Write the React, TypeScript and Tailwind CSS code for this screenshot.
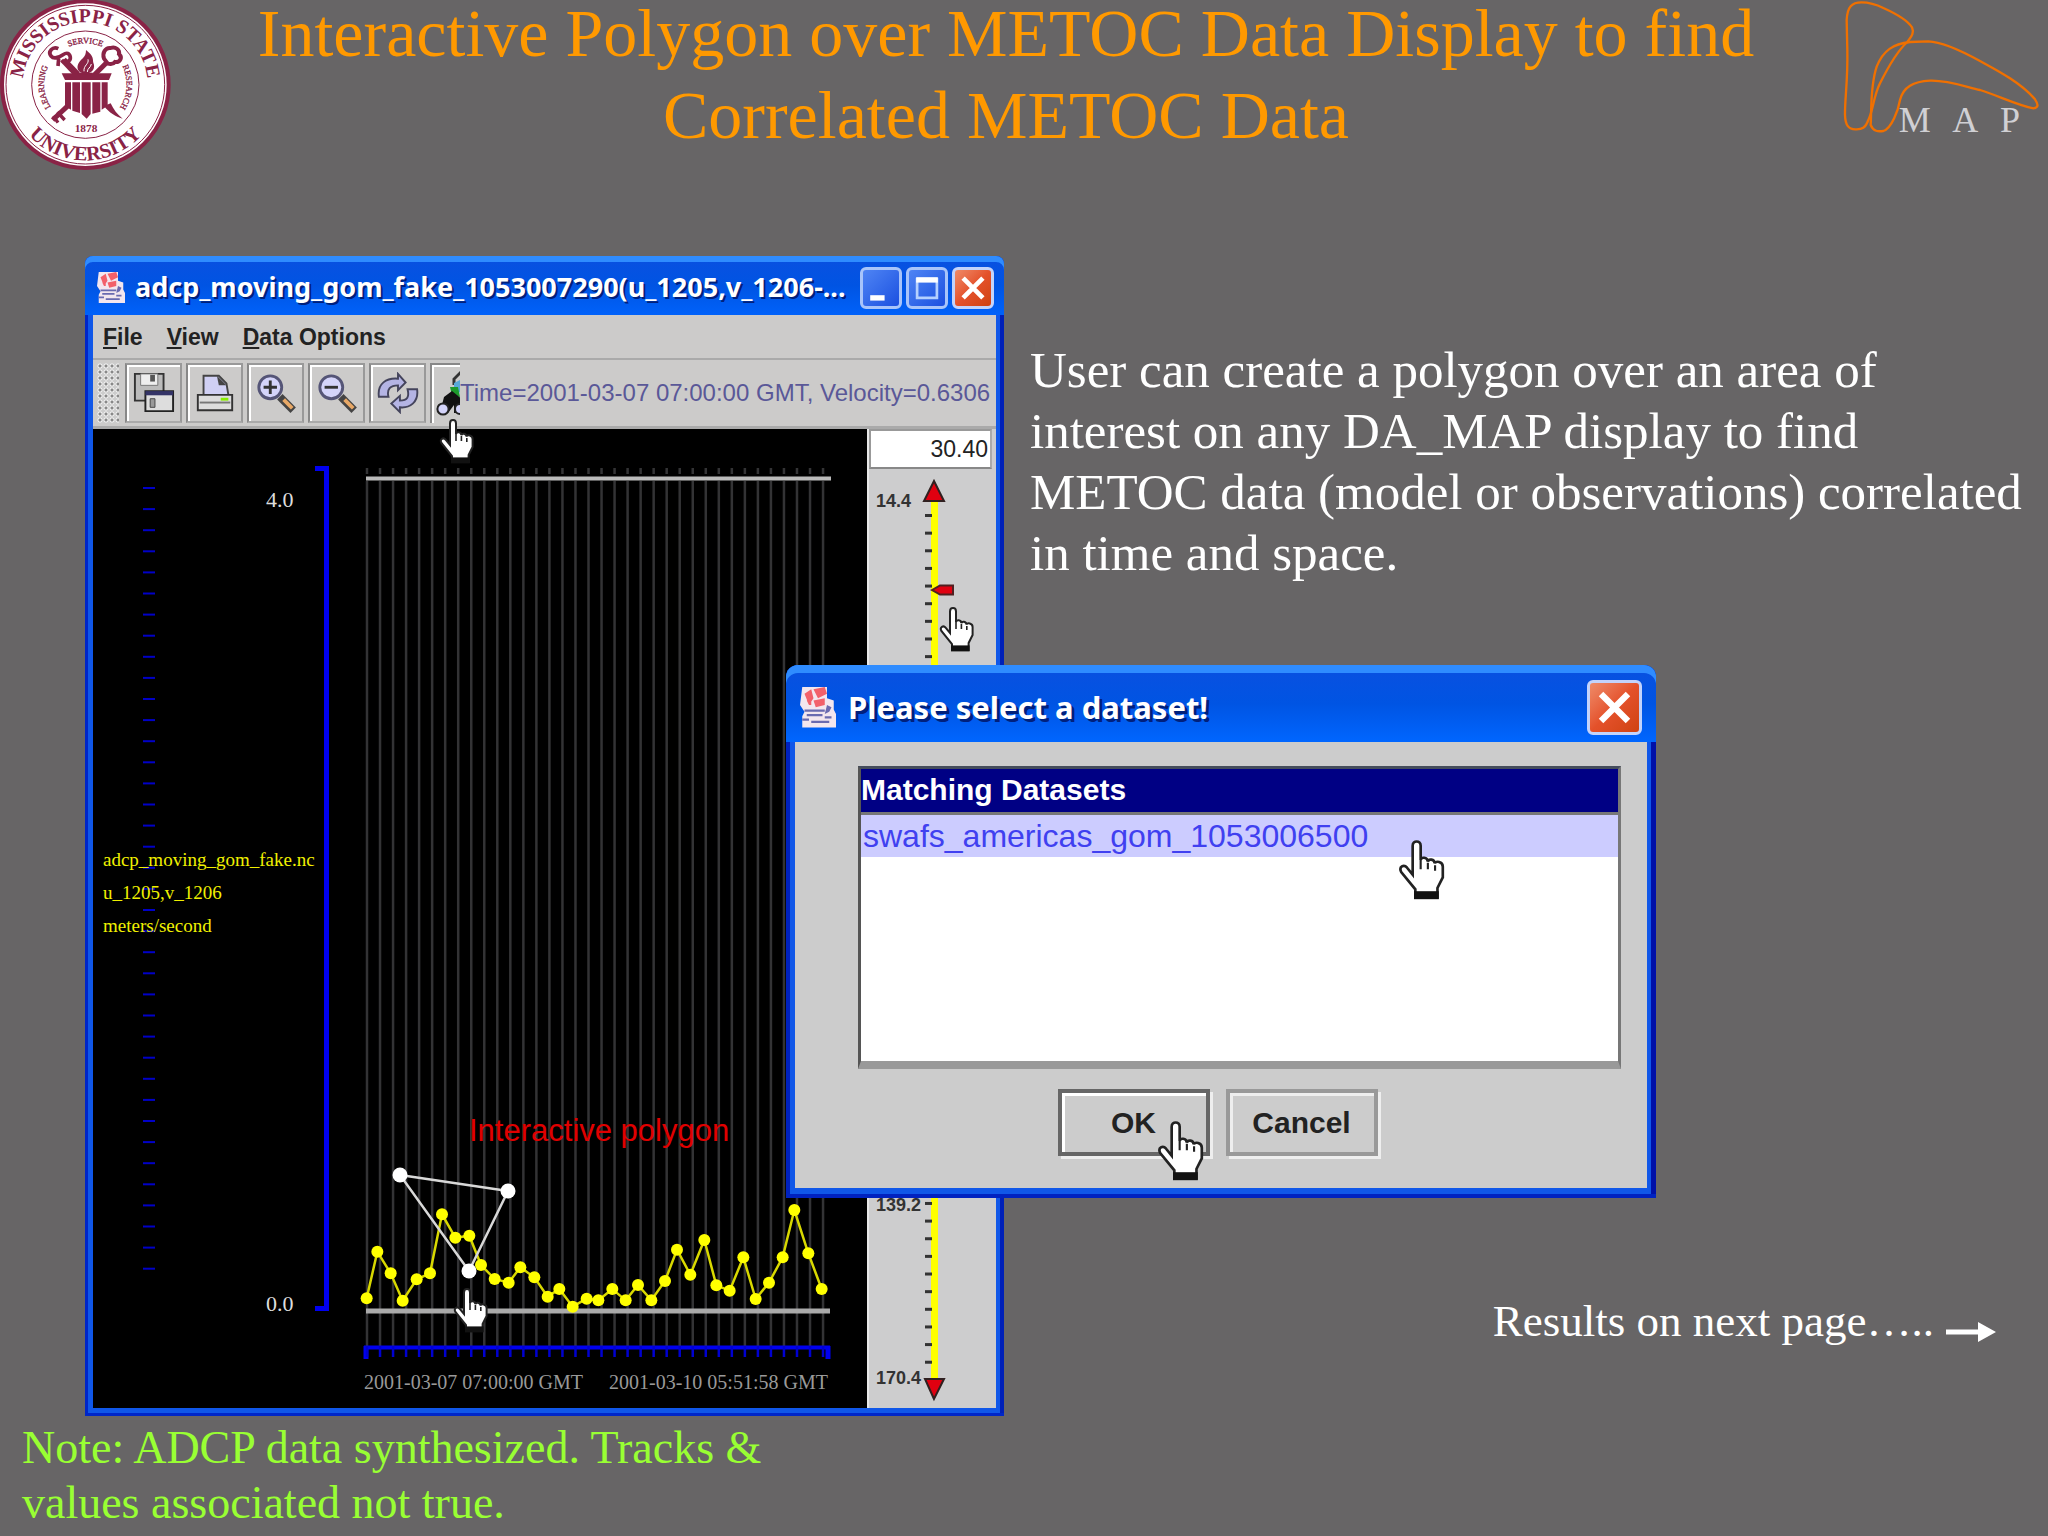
import { useState } from "react";
import type { ReactNode } from "react";

const MAROON = "#8a2346";

// readings of the current profile, [x, y] in chart units
const readings = [
  [80, 655], [112, 515], [152, 580], [188, 662], [230, 598], [270, 580],
  [306, 403], [346, 473], [388, 467], [423, 555], [464, 597], [506, 608],
  [541, 562], [583, 592], [623, 650], [658, 627], [698, 680], [740, 656],
  [775, 661], [817, 627], [857, 661], [894, 615], [934, 661], [975, 603],
  [1011, 509], [1051, 584], [1093, 480], [1129, 616], [1169, 632], [1210, 532],
  [1247, 657], [1287, 608], [1328, 532], [1363, 390], [1405, 520], [1445, 627],
].map(([x, y]) => [340 + x / 3, 1080 + y / 3]);

const polygon = [
  [400, 1175],
  [508, 1191],
  [469, 1271],
];

const depthTicks = Array.from({ length: 38 }, (_, i) => 488 + i * 21.1);

function Seal() {
  return (
    <svg viewBox="0 0 540 540" className="mr-3 w-[180px] shrink-0" role="img" aria-label="Mississippi State University">
      <defs>
        <path id="sealTop" d="M69 254a187 187 0 0 1 374 0" />
        <path id="sealBottom" d="M29 254a227 227 0 0 0 454 0" />
        <path id="sealInner" d="M256 378a124 124 0 0 1 0 -248a124 124 0 0 1 0 248" />
      </defs>
      <circle cx="256" cy="254" r="250" fill="#fff" stroke={MAROON} strokeWidth="12" />
      <circle cx="256" cy="254" r="238" fill="none" stroke={MAROON} strokeWidth="3" />
      <circle cx="256" cy="254" r="161" fill="none" stroke={MAROON} strokeWidth="3" />
      <g fill={MAROON} fontFamily="'Liberation Serif', serif" fontWeight="700" textAnchor="middle">
        <text fontSize="59">
          <textPath href="#sealTop" startOffset="50%">MISSISSIPPI STATE</textPath>
        </text>
        <text fontSize="61">
          <textPath href="#sealBottom" startOffset="50%">UNIVERSITY</textPath>
        </text>
        <g fontSize="25" fontWeight="400" stroke={MAROON} strokeWidth="1">
          <text>
            <textPath href="#sealInner" startOffset="24%">LEARNING</textPath>
          </text>
          <text>
            <textPath href="#sealInner" startOffset="50%">SERVICE</textPath>
          </text>
          <text>
            <textPath href="#sealInner" startOffset="76%">RESEARCH</textPath>
          </text>
        </g>
        <text x="258" y="396" fontSize="34">1878</text>
      </g>
      <g fill="none" stroke={MAROON} strokeWidth="15">
        <path d="M318 190L282 226" />
        <path d="M312 176c-6-18 4-34 20-32 14-6 28 6 25 18 12 12 2 26-12 24-6 8-20 8-24 2z" strokeWidth="12" />
        <path d="M190 180L232 224" strokeWidth="20" />
        <path d="M175 146c-18-8-32 10-22 22 8 10 24 4 36-4 12-8 20-4 22 8 2 14-18 18-26 8M176 176l-2 22" strokeWidth="11" />
        <path d="M205 316L158 360" />
        <path d="M172 336l22 24M160 348l14 20" strokeWidth="10" />
      </g>
      <g fill={MAROON}>
        <path d="M185 220h150l-8 20H195z" />
        <path d="M195 247h18v82l-18-10zM217 247h23v92l-23-7zM245 247h27v95l-12 14-15-14zM277 247h24v88l-24 6zM305 247h18v70l-18 12z" />
        <path d="M312 318l20-8c8 18 20 34 36 46-22-6-40-18-56-38z" />
        <path d="M258 150c24 18 20 28 22 38 8 18-6 34-24 32-22 2-30-18-18-34 8-12 20-14 20-36z" />
        <path d="M232 218h46v6h-46z" />
      </g>
      <path d="M264 178c4 14-14 18-12 36M274 192c-2 12-12 12-12 24" fill="none" stroke="#fff" strokeWidth="3" />
    </svg>
  );
}

function MapLogo() {
  return (
    <svg viewBox="0 0 684 450" className="w-[228px] shrink-0" role="img" aria-label="DA_MAP">
      <g fill="none" stroke="#f07000" strokeWidth="7">
        <path d="M80 60C82 20 95 7 125 7C150 7 170 14 190 24C230 42 262 60 276 82C284 100 272 112 262 126C235 150 205 200 180 250C160 290 160 330 145 360C136 385 125 388 110 388C85 390 76 375 75 345C74 300 84 240 82 150Z" />
        <path d="M152 375C160 395 175 395 190 393C215 385 235 330 240 300C250 260 280 245 330 242C380 240 430 258 480 270C530 285 590 315 640 325C658 322 654 312 645 298C600 245 520 205 480 183C420 150 360 125 325 124L270 126C220 132 190 150 170 200C150 260 155 330 152 375Z" />
      </g>
      <g fill="#d0d0d4" fontFamily="'Liberation Serif', serif" fontSize="108">
        <text x="236" y="396">M</text>
        <text x="397" y="396">A</text>
        <text x="540" y="396">P</text>
      </g>
    </svg>
  );
}

function JavaIcon({ className }: { className: string }) {
  return (
    <svg viewBox="0 0 16 18" className={className} aria-hidden="true">
      <path d="M1 0h11v5l3 1v4l1 2v6H1v-5l1-2-2-3z" fill="#f3e6ee" />
      <path d="M2 3l3-2 1 4-2 3zM6 1l5-1 1 3-4 2zM6 6l5-1v3l-4 1zM3 6h2v2H4z" fill="#f2606a" />
      <path d="M2 10h9v1H2zM12 8l2 1-1 2-2 1zM3 12h7v1H3zM1 14h3v1H1zM5 15h8v1H5zM11 13h3v1h-3z" fill="#6a6ab0" />
    </svg>
  );
}

function Hand({ className }: { className: string }) {
  return (
    <svg viewBox="0 0 18 23" className={`pointer-events-none absolute ${className}`} aria-hidden="true">
      <path
        d="M5.500 13V2.200c0-2.200 3-2.200 3 0V7.500c.2-1.200 2.500-1.200 2.700.6c.3-1.200 2.400-1 2.600.7c.3-1.100 3-.8 3 1.200V14l-2 4v3.500h-8.300V18.500L1.200 12C.2 10 2.200 9 3.400 10.400z"
        fill="#fff"
        stroke="#222"
        strokeWidth="1"
      />
      <path d="M8.500 7.500v3.500M11.200 8.500V11M13.900 9.500V11.500" stroke="#222" strokeWidth="0.800" />
      <path d="M6 19.200h9.300v3H6z" fill="#111" />
    </svg>
  );
}

function CloseButton({ className }: { className: string }) {
  return (
    <button
      aria-label="Close"
      className={`rounded-md border-3 border-[#c3d3fb] bg-linear-to-br from-[#ee8a68] via-[#e4512a] to-[#cf4210] ${className}`}
    >
      <svg viewBox="0 0 20 20" className="w-full">
        <path d="M4.500 4.500l11 11M15.500 4.500l-11 11" stroke="#fff" strokeWidth="2.600" />
      </svg>
    </button>
  );
}

function ToolButton({ label, children }: { label: string; children: ReactNode }) {
  return (
    <button
      aria-label={label}
      className="flex h-[60px] w-[57px] shrink-0 items-center justify-center border-2 border-t-[#999] border-l-[#888] border-r-[#999] border-b-[#aaa] shadow-[inset_2px_2px_#fff]"
    >
      <svg viewBox="0 0 22 22" className="w-[42px]">
        {children}
      </svg>
    </button>
  );
}

function Magnifier({ plus }: { plus: boolean }) {
  return (
    <>
      <path d="M13 13l7 7" stroke="#444" strokeWidth="4" />
      <path d="M15 14.500l4.500 4.500" stroke="#e8a866" strokeWidth="2" />
      <circle cx="8" cy="8" r="6" fill="#d4d4fa" stroke="#555577" strokeWidth="1.500" />
      <path d={plus ? "M4.500 8h7M8 4.500v7" : "M4.500 8h7"} stroke="#333" strokeWidth="1.500" />
    </>
  );
}

function Toolbar() {
  return (
    <div className="flex h-[71px] items-center border-t-2 border-b-3 border-t-[#aaa] border-b-[#aaa] bg-[#cccbca] pl-1">
      <div className="mr-1.5 h-[60px] w-[22px] bg-[radial-gradient(#888_1px,#f4f4f4_2px,#ccc_3px)] bg-[length:6px_6px]" />
      <div className="flex gap-1">
        <ToolButton label="Save">
          <path d="M1 1h15v14H1z" fill="#bbb" stroke="#333" />
          <path d="M4 1h9v6H4z" fill="#eee" stroke="#777" strokeWidth="0.500" />
          <path d="M9 1.500h2.500V5H9z" fill="#555" />
          <path d="M6.500 10h14.500v10.500h-14.500z" fill="#ddd" stroke="#222" />
          <path d="M6.500 10h14.500v2.200h-14.500z" fill="#333366" />
          <path d="M9 14h2.500v4.500h-2.500z" fill="#999" stroke="#444" strokeWidth="0.500" />
        </ToolButton>
        <ToolButton label="Print">
          <path d="M5 12V2h8l4 4 1 6z" fill="#d0d0f4" stroke="#444" />
          <path d="M12 2l5 5h-4z" fill="#444" />
          <path d="M2 12h18v8H2z" fill="#ddd" stroke="#333" />
          <path d="M3 16h16" stroke="#777" />
          <path d="M14 13.500h4v1.500h-4z" fill="#8e0" />
        </ToolButton>
        <ToolButton label="Zoom in">
          <Magnifier plus />
        </ToolButton>
        <ToolButton label="Zoom out">
          <Magnifier plus={false} />
        </ToolButton>
        <ToolButton label="Refresh">
          <g fill="#b4b4e4" stroke="#44445c" strokeWidth="1">
            <path d="M1 13C0 6 5 3 11 3.500V1l4 4.500-4 4V7C7 7 5 9 6 13z" />
            <path d="M21 9C22 16 17 19 12 18.500V21l-4.500-4.500 4.500-4V15c4 0 5-2 4-6z" />
          </g>
        </ToolButton>
        <button
          aria-label="Find correlated data"
          className="h-[60px] w-[30px] shrink-0 overflow-hidden border-t-2 border-l-2 border-[#888] shadow-[inset_2px_2px_#fff]"
        >
          <svg viewBox="0 0 15 30" className="w-[30px]">
            <path d="M15 3L11 7v3" fill="none" stroke="#333" strokeWidth="1.500" />
            <path d="M11 9l4-2v6l-4 2z" fill="#58a8d8" />
            <path d="M9 11h4l1 5-4-1z" fill="#1d9a2c" />
            <path d="M6 16l4-3 5 4v7h-4v-4l-3 4H4z" fill="#111" />
            <circle cx="5.500" cy="22" r="2.800" fill="#d4d4fa" stroke="#222" />
            <circle cx="14" cy="22" r="2.500" fill="#d4d4fa" stroke="#222" />
          </svg>
        </button>
      </div>
      <output className="min-w-0 flex-1 text-[24px] whitespace-nowrap text-[#5a5898]">
        Time=2001-03-07 07:00:00 GMT, Velocity=0.6306
      </output>
    </div>
  );
}

function Chart() {
  const line = readings.map((p) => p.join(",")).join(" ");

  return (
    <svg viewBox="93 429 774 979" className="block h-auto w-full bg-black">
      <g stroke="#0000c8" strokeWidth="2">
        {depthTicks.map((y) => (
          <path key={y} d={`M143 ${y}h12`} />
        ))}
      </g>
      <path d="M315 468.500h11.500v840H315" fill="none" stroke="#0000f0" strokeWidth="5" />

      <g stroke="#333335" strokeWidth="2.500">
        {Array.from({ length: 36 }, (_, i) => (
          <path key={i} d={`M${367 + i * 13.030} 468v6m0 7v865`} />
        ))}
      </g>
      <path d="M366 478.500h465" stroke="#bbb" strokeWidth="4" />
      <path d="M366 1311h464" stroke="#aaa" strokeWidth="5" />

      <path d="M364 1347.500h466" stroke="#0000f0" strokeWidth="4" />
      <path d="M366 1346v13M828 1346v13" stroke="#0000f0" strokeWidth="5" />
      <g stroke="#0000d0" strokeWidth="2.500">
        {Array.from({ length: 36 }, (_, i) => (
          <path key={i} d={`M${367 + i * 13.030} 1346v11`} />
        ))}
      </g>

      <g fontFamily="'Liberation Serif', serif">
        <g fontSize="22" fill="#ddd">
          <text x="266" y="507">4.0</text>
          <text x="266" y="1311">0.0</text>
        </g>
        <g fontSize="19" fill="#f0f000">
          <text x="103" y="866">adcp_moving_gom_fake.nc</text>
          <text x="103" y="899">u_1205,v_1206</text>
          <text x="103" y="932">meters/second</text>
        </g>
        <g fontSize="20" fill="#999">
          <text x="364" y="1389">2001-03-07 07:00:00 GMT</text>
          <text x="609" y="1389">2001-03-10 05:51:58 GMT</text>
        </g>
      </g>
      <text x="469" y="1141" fontFamily="'Liberation Sans', sans-serif" fontSize="31" fill="#e00000">
        Interactive polygon
      </text>

      <polyline points={line} fill="none" stroke="#d8d800" strokeWidth="2.500" />
      {readings.map(([x, y]) => (
        <circle key={x} cx={x} cy={y} r="6" fill="#ff0" />
      ))}
      <polygon points={polygon.map((p) => p.join(",")).join(" ")} fill="none" stroke="#d8d8d8" strokeWidth="2.500" />
      {polygon.map(([x, y]) => (
        <circle key={x} cx={x} cy={y} r="7.500" fill="#fff" />
      ))}
    </svg>
  );
}

function DepthPanel() {
  const [depth, setDepth] = useState("30.40");

  return (
    <div className="min-w-0 border-l-2 border-[#e8e8e8] bg-[#cdcdce]">
      <div className="pr-1">
        <input
          aria-label="Depth"
          value={depth}
          onChange={(e) => setDepth(e.target.value)}
          className="block h-[40px] w-full border-2 border-t-[#999] border-l-[#999] border-r-[#aaa] border-b-[#888] bg-white pr-[2px] text-right text-[#222]"
        />
      </div>
      <div className="relative">
        <svg viewBox="869 469 127 939" className="block h-auto w-full">
          <path d="M934.500 500v880" stroke="#ff0" strokeWidth="7" />
          <g stroke="#333" strokeWidth="3">
            {Array.from({ length: 49 }, (_, i) => (
              <path key={i} d={`M925 ${515.500 + i * 17.640}h7`} />
            ))}
          </g>
          <path d="M934 481l10 20h-20zM934 1399l-9-20h19z" fill="#e00010" stroke="#302020" strokeWidth="2" />
          <path d="M932 590l8-4.500h13v9h-13z" fill="#e00010" stroke="#502020" strokeWidth="2" />
          <g fontFamily="'Liberation Sans', sans-serif" fontSize="18" fontWeight="700" fill="#333">
            <text x="876" y="507">14.4</text>
            <text x="876" y="1211">139.2</text>
            <text x="876" y="1384">170.4</text>
          </g>
        </svg>
        <input
          type="range"
          aria-label="Depth slider"
          min="14.4"
          max="170.4"
          step="0.1"
          value={Number(depth) || 0}
          onChange={(e) => setDepth(Number(e.target.value).toFixed(2))}
          className="absolute inset-0 h-full w-full opacity-0 [direction:rtl] [writing-mode:vertical-lr]"
        />
      </div>
    </div>
  );
}

function DataWindow() {
  return (
    <div className="relative rounded-t-lg bg-[#1057e8] p-2 pt-0 font-['Liberation_Sans',sans-serif] text-[23px] shadow-[inset_3px_-3px_#0026c8,inset_-4px_0_#0020b8]">
      <div className="-mx-2 flex h-[59px] items-center rounded-t-lg bg-linear-to-b from-[#0a50e0] via-[#0054e3] to-[#0062fa] pt-1 pr-[10px] pl-3 text-white shadow-[inset_0_6px_#2f8cff]">
        <JavaIcon className="mr-[10px] w-7" />
        <h2 className="min-w-0 flex-1 font-['Noto_Sans',sans-serif] text-[27px] font-bold whitespace-nowrap [text-shadow:2px_2px_#00207c]">
          adcp_moving_gom_fake_1053007290(u_1205,v_1206-...
        </h2>
        <div className="flex gap-1">
          <button
            aria-label="Minimize"
            className="size-[42px] rounded-md border-3 border-[#a8c4fa] bg-linear-to-br from-[#4f84f4] to-[#1c4fe0]"
          >
            <svg viewBox="0 0 20 20">
              <path d="M4 14h8v3H4z" fill="#fff" />
            </svg>
          </button>
          <button
            aria-label="Maximize"
            className="size-[42px] rounded-md border-3 border-[#a8c4fa] bg-linear-to-br from-[#4f84f4] to-[#1c4fe0]"
          >
            <svg viewBox="0 0 20 20">
              <path d="M4.500 5h11v10.500h-11z" fill="none" stroke="#b4d0ff" strokeWidth="1.500" />
              <path d="M4 4h12v3H4z" fill="#fff" />
            </svg>
          </button>
          <CloseButton className="size-[42px]" />
        </div>
      </div>

      <nav className="flex h-[43px] items-center gap-6 bg-[#cccbca] pt-[2px] pl-[10px] font-bold text-[#222]">
        <button><u>F</u>ile</button>
        <button><u>V</u>iew</button>
        <button><u>D</u>ata Options</button>
      </nav>
      <Toolbar />
      <div className="grid grid-cols-[774fr_129fr]">
        <Chart />
        <DepthPanel />
      </div>

      <Hand className="top-[163px] left-[354px] w-9" />
      <Hand className="top-[351px] left-[854px] w-9" />
      <Hand className="top-[1032px] left-[368px] w-9" />
    </div>
  );
}

function DatasetDialog() {
  return (
    <div
      role="dialog"
      aria-label="Please select a dataset!"
      className="absolute top-[409px] left-[786px] w-[870px] rounded-t-xl bg-[#1057e8] px-[9px] pb-[10px] font-['Liberation_Sans',sans-serif] text-[30px] shadow-[inset_4px_-4px_#0022c0,inset_-5px_0_#0010a8]"
    >
      <div className="-mx-[9px] flex h-[77px] items-center rounded-t-xl bg-linear-to-b from-[#0a50e0] via-[#0054e3] to-[#0066ff] pr-[14px] pl-[14px] pt-2 text-white shadow-[inset_0_8px_#2f8cff]">
        <JavaIcon className="mr-3 w-9" />
        <h2 className="flex-1 font-['Noto_Sans',sans-serif] text-[31px] font-bold [text-shadow:3px_3px_#00207c]">
          Please select a dataset!
        </h2>
        <CloseButton className="size-[55px]" />
      </div>

      <div className="bg-[#cccccc] pt-6 pr-[26px] pb-8 pl-[63px]">
        <div className="h-[303px] border-3 border-t-[#444c5c] border-r-[#777] border-b-8 border-l-[#555] border-b-[#999] bg-white">
          <table className="w-full border-collapse text-left">
            <thead>
              <tr className="h-[44px] border-b-3 border-[#777] bg-[#000084] text-white">
                <th className="leading-[42px] font-bold">Matching Datasets</th>
              </tr>
            </thead>
            <tbody>
              <tr className="h-[44px] bg-[#ccccff] text-[32px] text-[#4040f0]">
                <td className="pl-[2px] leading-[42px]">swafs_americas_gom_1053006500</td>
              </tr>
            </tbody>
          </table>
        </div>
        <div className="mt-5 flex justify-center gap-4 pr-11 font-bold text-[#222]">
          <button className="h-[67px] w-[152px] border-4 border-[#666] shadow-[inset_3px_3px_#fff,3px_3px_#eee]">OK</button>
          <button className="h-[67px] w-[152px] border-4 border-[#999] shadow-[inset_3px_3px_#eee,3px_3px_#eee]">Cancel</button>
        </div>
      </div>

      <Hand className="top-[175px] left-[612px] w-12" />
      <Hand className="top-[456px] left-[371px] w-12" />
    </div>
  );
}

export default function App() {
  return (
    <main className="min-h-screen overflow-x-hidden bg-[#676566] font-['Liberation_Serif',serif]">
      <header className="flex h-[180px] items-start">
        <Seal />
        <h1 className="-mt-2 flex-1 text-center text-[68px] leading-[82px] text-[#ff9900]">
          Interactive Polygon over METOC Data Display to find
          <br />
          Correlated METOC Data
        </h1>
        <MapLogo />
      </header>

      <section className="relative mt-[76px] grid grid-cols-[919fr_1044fr] pl-[85px]">
        <DataWindow />
        <div className="flex flex-col justify-between pt-[84px] pl-[26px] text-white">
          <p className="text-[51px] leading-[61px]">
            User can create a polygon over an area of
            <br />
            interest on any DA_MAP display to find
            <br />
            METOC data (model or observations) correlated
            <br />
            in time and space.
          </p>
          <a href="#results" className="mb-[67px] flex items-center justify-end gap-3 pr-[52px] text-[45px] leading-[55px]">
            Results on next page…..
            <svg viewBox="0 0 50 22" className="mt-5 w-[50px]" aria-hidden="true">
              <path d="M0 8.500h32V1l18 10-18 10v-7.500H0z" fill="#fff" />
            </svg>
          </a>
        </div>
        <DatasetDialog />
      </section>

      <p className="mt-1 pl-[22px] text-[46px] leading-[55px] text-[#99ff33]">
        Note: ADCP data synthesized. Tracks &amp;
        <br />
        values associated not true.
      </p>
    </main>
  );
}
